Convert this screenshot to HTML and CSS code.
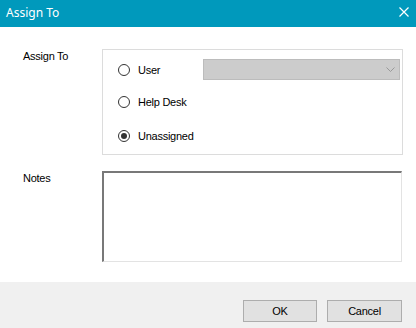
FILE: index.html
```html
<!DOCTYPE html>
<html lang="en">
<head>
  <meta charset="UTF-8" />
  <title>Assign To</title>
  <link rel="stylesheet" href="styles.css">
</head>
<body>
  <div class="dialog">
    <div class="title-bar">
      <span class="title">Assign To</span>
      <svg class="close-icon" width="10" height="10" viewBox="0 0 10 10">
        <path d="M0.5 0.5 L9.5 9.5 M9.5 0.5 L0.5 9.5" stroke="#fff" stroke-width="1.2" fill="none"/>
      </svg>
    </div>

    <div class="content">
      <div class="form-row">
        <div class="field-label">Assign To</div>
        <div class="group-box">
          <div class="radio-row first">
            <label class="radio-item fixed">
              <span class="radio"></span>
              <span>User</span>
            </label>
            <div class="select-box">
              <svg width="9" height="5" viewBox="0 0 9 5">
                <path d="M0.5 0.5 L4.5 4.5 L8.5 0.5" stroke="#999" stroke-width="1" fill="none"/>
              </svg>
            </div>
          </div>
          <div class="radio-row second">
            <label class="radio-item">
              <span class="radio"></span>
              <span>Help Desk</span>
            </label>
          </div>
          <div class="radio-row">
            <label class="radio-item">
              <span class="radio checked"></span>
              <span>Unassigned</span>
            </label>
          </div>
        </div>
      </div>

      <div class="form-row notes-row">
        <div class="field-label">Notes</div>
        <div class="notes-box"></div>
      </div>
    </div>

    <div class="footer">
      <button class="dlg-button">OK</button>
      <button class="dlg-button cancel">Cancel</button>
    </div>
  </div>
</body>
</html>
```

FILE: styles.css
```css
body {
  margin: 0;
  font-family: "Liberation Sans", Arial, sans-serif;
  font-size: 11px;
  letter-spacing: -0.25px;
  color: #000;
  background: #fff;
}
.dialog {
  width: 416px;
  height: 328px;
  display: flex;
  flex-direction: column;
}
.title-bar {
  height: 27px;
  background-color: #0099bc;
  display: flex;
  align-items: center;
  justify-content: space-between;
  padding: 0 7px 0 6px;
}
.title {
  color: #fff;
  font-family: "Noto Sans", "Open Sans", sans-serif;
  font-size: 12px;
  letter-spacing: 0;
  margin-top: -2px;
}
.close-icon {
  margin-top: -3px;
}
.content {
  height: 255px;
  padding-top: 22px;
  box-sizing: border-box;
}
.form-row {
  display: flex;
}
.field-label {
  width: 79px;
  padding-left: 23px;
  line-height: 13px;
  padding-top: 1px;
}
.group-box {
  width: 301px;
  height: 106px;
  box-sizing: border-box;
  border: 1px solid #dcdcdc;
  padding: 9px 2px 0 15px;
}
.radio-row {
  display: flex;
  align-items: center;
  height: 21px;
}
.radio-row.first {
  margin-bottom: 11px;
}
.radio-row.second {
  margin-bottom: 13px;
}
.radio-item {
  display: flex;
  align-items: center;
  gap: 8px;
}
.radio-item.fixed {
  width: 85px;
}
.radio {
  width: 12px;
  height: 12px;
  box-sizing: border-box;
  border: 1px solid #333;
  border-radius: 50%;
  display: flex;
  align-items: center;
  justify-content: center;
}
.radio.checked::after {
  content: "";
  width: 6px;
  height: 6px;
  border-radius: 50%;
  background: #333;
}
.select-box {
  flex: 1;
  height: 21px;
  box-sizing: border-box;
  background: #cccccc;
  border: 1px solid #bcbcbc;
  display: flex;
  align-items: center;
  justify-content: flex-end;
  padding-right: 4px;
}
.notes-row {
  margin-top: 16px;
}
.notes-box {
  width: 300px;
  height: 91px;
  box-sizing: border-box;
  border-style: solid;
  border-width: 2px 1px 1px 2px;
  border-color: #787878 #e3e3e3 #e3e3e3 #787878;
  background: #fff;
}
.footer {
  flex: 1;
  background: #f0f0f0;
  display: flex;
  justify-content: flex-end;
  align-items: flex-start;
  gap: 10px;
  padding: 18px 14px 0 0;
}
.dlg-button {
  width: 74px;
  height: 22px;
  background: #e1e1e1;
  border: 1px solid #adadad;
  border-radius: 0;
  font-family: "Liberation Sans", Arial, sans-serif;
  font-size: 11px;
  letter-spacing: -0.25px;
  color: #000;
  padding: 0;
}
.dlg-button.cancel {
  width: 75px;
}
```
